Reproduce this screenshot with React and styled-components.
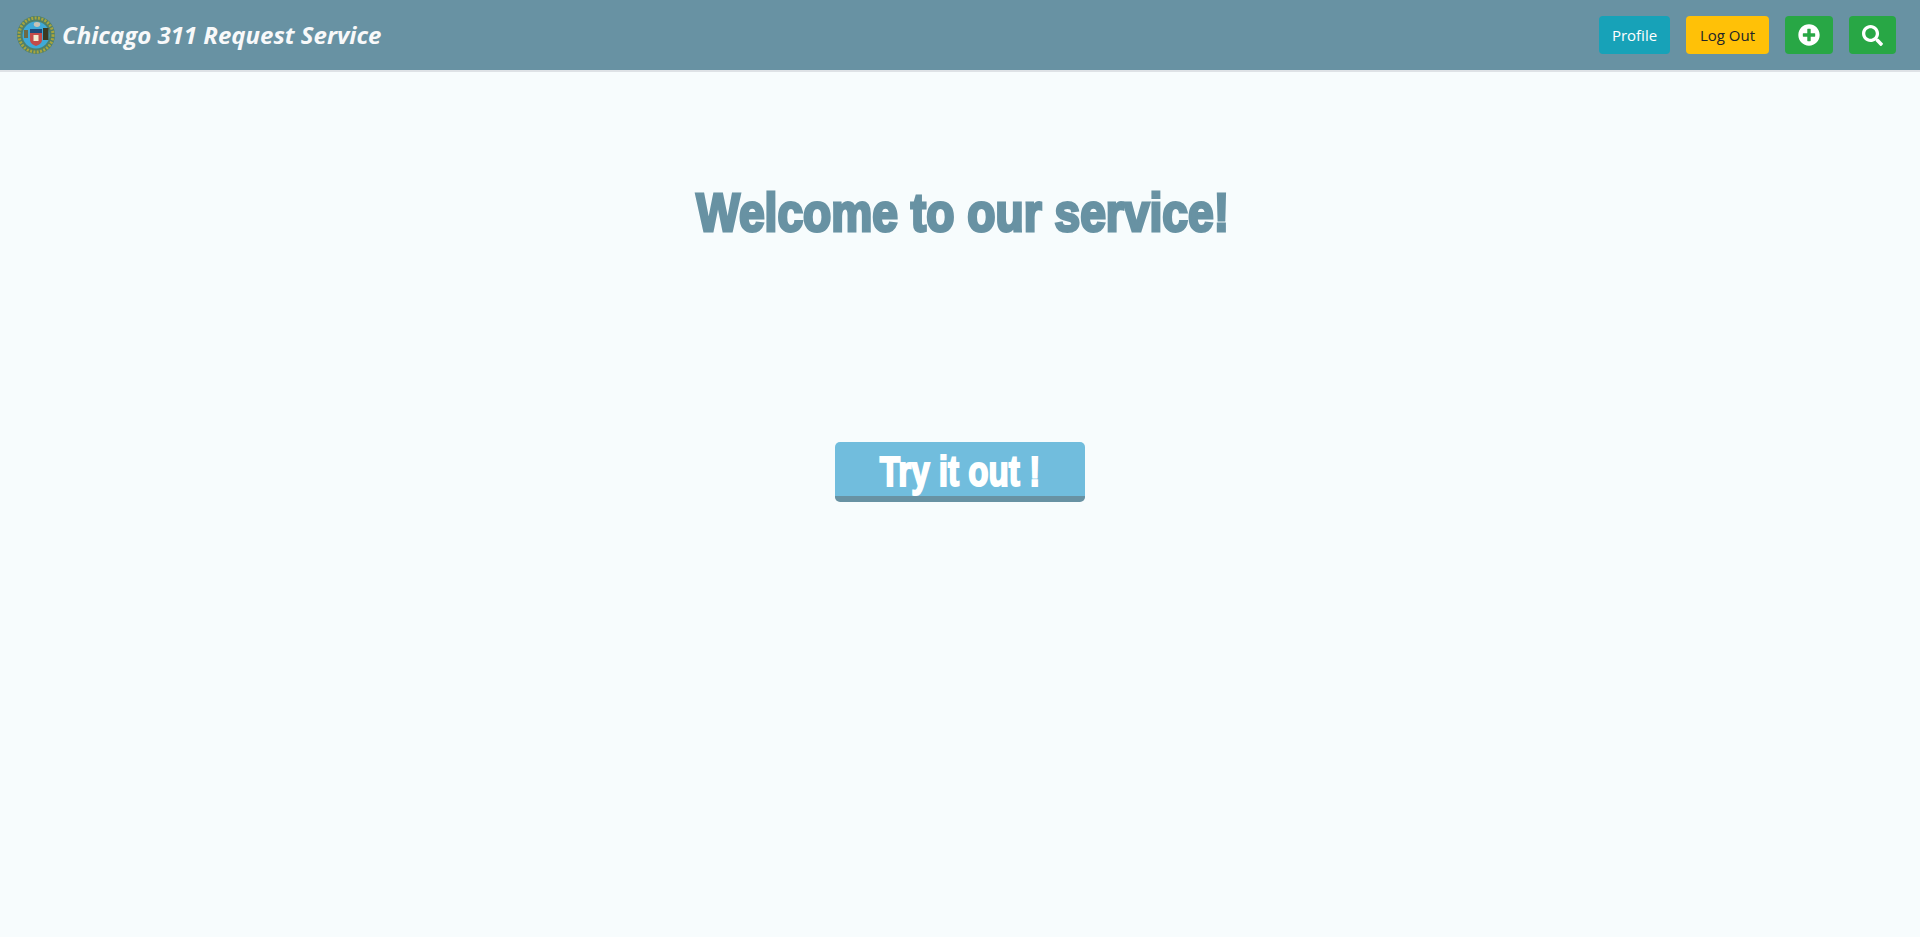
import React from 'react';
import styled, { createGlobalStyle } from 'styled-components';
import { FaPlusCircle, FaSearch } from 'react-icons/fa';

const GlobalStyle = createGlobalStyle`
  html, body {
    margin: 0;
    padding: 0;
    background: #f7fcfd;
    font-family: 'Open Sans', 'Noto Sans', sans-serif;
  }
`;

const Page = styled.div`
  min-height: 937px;
  display: flex;
  flex-direction: column;
`;

const Navbar = styled.nav`
  height: 70px;
  background: #6892a3;
  border-bottom: 2px solid #dee2e6;
  display: flex;
  align-items: center;
  justify-content: space-between;
  padding: 0 24px 0 16px;
`;

const Brand = styled.div`
  display: flex;
  align-items: center;
  gap: 6px;
  color: #f8f9fa;
  font-size: 24px;
  font-weight: 700;
  font-style: italic;
`;

const BrandText = styled.span`
  margin-top: -2px;
`;

const Actions = styled.div`
  display: flex;
  align-items: center;
  gap: 16px;
`;

const NavButton = styled.button`
  height: 38px;
  width: ${(p) => p.$width}px;
  padding: 0;
  border: 0;
  border-radius: 4px;
  background: ${(p) => p.$bg};
  color: ${(p) => p.$color || '#fff'};
  font-family: inherit;
  font-size: 15px;
  display: flex;
  align-items: center;
  justify-content: center;
`;

const Main = styled.main`
  display: flex;
  flex-direction: column;
  align-items: center;
`;

const Heading = styled.h1`
  margin: 100px 0 0 5px;
  color: #6892a3;
  font-family: 'Liberation Sans', sans-serif;
  font-size: 54px;
  line-height: 80px;
  font-weight: 700;
  white-space: nowrap;
  -webkit-text-stroke: 3px #6892a3;
  transform: scaleX(0.855);
`;

const TryButton = styled.button`
  margin-top: 190px;
  width: 250px;
  height: 60px;
  border: 0;
  border-bottom: 6px solid #6892a3;
  border-radius: 5px;
  background: #71bddd;
  padding: 5px 0 0;
`;

const TryLabel = styled.span`
  display: block;
  color: #fff;
  font-family: 'Liberation Sans', sans-serif;
  font-size: 42px;
  font-weight: 700;
  line-height: 1;
  -webkit-text-stroke: 2px #fff;
  transform: scaleX(0.79);
`;

function Seal() {
  return (
    <svg width="40" height="40" viewBox="0 0 40 40">
      <circle cx="20" cy="20" r="19" fill="#4f7f6a" />
      <circle cx="20" cy="20" r="17" fill="none" stroke="#a8a53c" strokeWidth="3" strokeDasharray="2 1.4" />
      <circle cx="20" cy="20" r="13.5" fill="#3fa9d8" />
      <ellipse cx="21" cy="9.5" rx="3.2" ry="2.4" fill="#c9c3b6" />
      <rect x="8" y="15" width="4" height="8" fill="#6d6a45" />
      <rect x="27" y="13" width="5.5" height="12" fill="#3c3a22" />
      <rect x="14" y="14" width="12" height="4" fill="#1f4a7a" />
      <path d="M14 18h12v7c0 3-3 5-6 6-3-1-6-3-6-6z" fill="#c44a4a" />
      <rect x="17.5" y="20" width="5" height="6" fill="#f1ead0" />
    </svg>
  );
}

export default function App() {
  return (
    <Page>
      <GlobalStyle />
      <Navbar>
        <Brand>
          <Seal />
          <BrandText>Chicago 311 Request Service</BrandText>
        </Brand>
        <Actions>
          <NavButton $bg="#17a2b8" $width={71}>Profile</NavButton>
          <NavButton $bg="#ffc107" $color="#212529" $width={83}>Log Out</NavButton>
          <NavButton $bg="#28a745" $width={48}><FaPlusCircle size={22} /></NavButton>
          <NavButton $bg="#28a745" $width={47}><FaSearch size={21} /></NavButton>
        </Actions>
      </Navbar>
      <Main>
        <Heading>Welcome to our service!</Heading>
        <TryButton><TryLabel>Try it out !</TryLabel></TryButton>
      </Main>
    </Page>
  );
}
